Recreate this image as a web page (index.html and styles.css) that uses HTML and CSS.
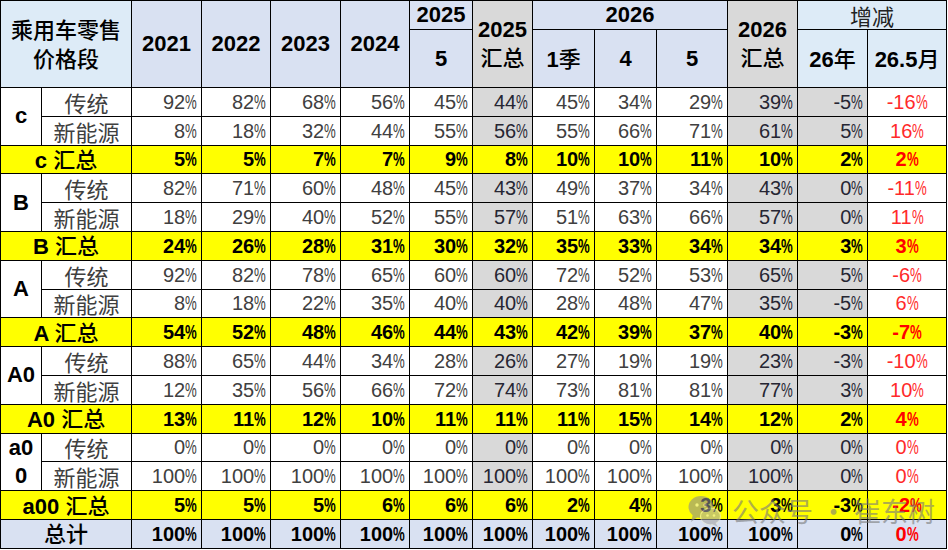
FILE: index.html
```html
<!DOCTYPE html>
<html lang="zh">
<head>
<meta charset="utf-8">
<link rel="stylesheet" href="styles.css">
</head>
<body>
<div class="wrap">
<table class="tbl">
  <colgroup>
    <col style="width:41px"><col style="width:90px">
    <col style="width:70px"><col style="width:69px"><col style="width:70px"><col style="width:69px">
    <col style="width:63px"><col style="width:60px">
    <col style="width:62px"><col style="width:62px"><col style="width:71px">
    <col style="width:70px"><col style="width:70px"><col style="width:79px">
  </colgroup>
  <thead>
    <tr class="h1">
      <th class="hb" colspan="2" rowspan="2"><span class="cj">乘用车零售<br>价格段</span></th>
      <th class="hy" rowspan="2">2021</th>
      <th class="hy" rowspan="2">2022</th>
      <th class="hy" rowspan="2">2023</th>
      <th class="hy" rowspan="2">2024</th>
      <th class="hy">2025</th>
      <th class="hg" rowspan="2">2025<br><span class="cj">汇总</span></th>
      <th class="hy" colspan="3">2026</th>
      <th class="hg" rowspan="2">2026<br><span class="cj">汇总</span></th>
      <th class="hb thin" colspan="2">增减</th>
    </tr>
    <tr class="h2">
      <th class="hy">5</th>
      <th class="hy">1<span class="cj">季</span></th>
      <th class="hy">4</th>
      <th class="hy">5</th>
      <th class="hb">26<span class="cj">年</span></th>
      <th class="hb">26.5<span class="cj">月</span></th>
    </tr>
  </thead>
  <tbody id="body"></tbody>
</table>
<div class="wm">
  <svg class="wm-ico" width="34" height="34" viewBox="0 0 34 34">
    <ellipse cx="13" cy="13" rx="12.5" ry="11" fill="#8c8c8c"/>
    <path d="M5 20 L3 28 L11 22 Z" fill="#8c8c8c"/>
    <circle cx="9" cy="11" r="1.7" fill="#e8e8d0"/>
    <circle cx="17" cy="11" r="1.7" fill="#e8e8d0"/>
    <ellipse cx="22.5" cy="22.5" rx="10" ry="8.5" fill="#a6a6a6" stroke="#e8e8d0" stroke-width="1.2"/>
    <path d="M27 28 L30 33 L23 29.5 Z" fill="#a6a6a6"/>
    <circle cx="19.5" cy="21.5" r="1.3" fill="#e8e8d0"/>
    <circle cx="26" cy="21.5" r="1.3" fill="#e8e8d0"/>
  </svg>
  <span class="wm-t">公众号<span class="dot">·</span>崔东树</span>
</div>
</div>
<script>
var data = [
  ["c", "传统", [92,82,68,56,45,44,45,34,29,39,-5,-16]],
  [null, "新能源", [8,18,32,44,55,56,55,66,71,61,5,16]],
  ["c", "sum", [5,5,7,7,9,8,10,10,11,10,2,2]],
  ["B", "传统", [82,71,60,48,45,43,49,37,34,43,0,-11]],
  [null, "新能源", [18,29,40,52,55,57,51,63,66,57,0,11]],
  ["B", "sum", [24,26,28,31,30,32,35,33,34,34,3,3]],
  ["A", "传统", [92,82,78,65,60,60,72,52,53,65,5,-6]],
  [null, "新能源", [8,18,22,35,40,40,28,48,47,35,-5,6]],
  ["A", "sum", [54,52,48,46,44,43,42,39,37,40,-3,-7]],
  ["A0", "传统", [88,65,44,34,28,26,27,19,19,23,-3,-10]],
  [null, "新能源", [12,35,56,66,72,74,73,81,81,77,3,10]],
  ["A0", "sum", [13,11,12,10,11,11,11,15,14,12,2,4]],
  ["a0<br>0", "传统", [0,0,0,0,0,0,0,0,0,0,0,0]],
  [null, "新能源", [100,100,100,100,100,100,100,100,100,100,0,0]],
  ["a00", "sum", [5,5,5,6,6,6,2,4,3,3,-3,-2]],
  ["", "total", [100,100,100,100,100,100,100,100,100,100,0,0]]
];
var grey = {5:1, 9:1, 10:1};
var html = "";
data.forEach(function (r) {
  var kind = r[1] === "sum" ? "sum" : (r[1] === "total" ? "tot" : "row");
  html += '<tr class="' + kind + '">';
  if (kind === "sum") {
    html += '<td colspan="2" class="lab">' + r[0] + ' <span class="cj">汇总</span></td>';
  } else if (kind === "tot") {
    html += '<td colspan="2" class="lab"><span class="cj">总计</span></td>';
  } else {
    if (r[0] !== null) html += '<td rowspan="2" class="cat">' + r[0] + '</td>';
    html += '<td class="sub">' + r[1] + '</td>';
  }
  r[2].forEach(function (v, i) {
    var cls = "n";
    if (kind === "row" && grey[i]) cls += " g";
    if (i === 11) cls += " red";
    var s = v < 0 ? "-" + (-v) : "" + v;
    html += '<td class="' + cls + '">' + s + '<span class="p">%</span></td>';
  });
  html += '</tr>';
});
document.getElementById("body").innerHTML = html;
</script>
</body>
</html>
```

FILE: styles.css
```css
html, body {
  margin: 0;
  padding: 0;
  background: #ffffff;
}

.wrap {
  position: relative;
  width: 948px;
  height: 550px;
  overflow: hidden;
}

.tbl {
  border-collapse: collapse;
  table-layout: fixed;
  width: 946px;
  font-family: "Liberation Sans", Arial, "Noto Sans CJK SC", sans-serif;
  color: #404040;
}

.tbl th, .tbl td {
  border: 1px solid #000;
  padding: 0;
  white-space: nowrap;
}

.cj {
  font-family: "Noto Sans CJK SC", sans-serif;
  font-weight: 500;
}

.h1 { height: 29px; }
.h2 { height: 58px; }

.tbl th {
  font-size: 22px;
  font-weight: 700;
  color: #000;
  text-align: center;
  line-height: 26px;
}

.hb { background: #ddebf7; }
.hy { background: #d9e1f2; }
.hg { background: #d9d9d9; }

.hb.thin {
  font-family: "Noto Sans CJK SC", sans-serif;
  font-weight: 400;
  color: #222;
}

.tbl tbody tr { height: 28.8px; }

.tbl td {
  font-size: 20px;
  line-height: 20px;
  height: 27px;
}

.p {
  display: inline-block;
  transform: scaleX(0.66);
  transform-origin: left center;
  margin-right: -6px;
}

.n {
  text-align: right;
  padding-right: 4px !important;
}

.n.red {
  text-align: center;
  padding-right: 0 !important;
  color: #ff2a2a;
}

.g {
  background: #d9d9d9;
  color: #262633;
}

.cat {
  text-align: center;
  font-size: 22px !important;
  font-weight: 700;
  color: #000;
  line-height: 28px !important;
}

.sub {
  text-align: center;
  font-family: "Noto Sans CJK SC", sans-serif;
  font-size: 22px !important;
  color: #404040;
}

.sum td {
  background: #ffff00;
  font-weight: 700;
  color: #000;
}

.sum td.red, .tot td.red { color: #ff0000; }

.tot td {
  background: #d9e1f2;
  font-weight: 700;
  color: #000;
}

.lab {
  text-align: center;
  font-size: 22px !important;
}

.wm {
  position: absolute;
  left: 688px;
  top: 491px;
  display: flex;
  align-items: center;
  gap: 10px;
  opacity: 0.6;
  pointer-events: none;
}

.wm-t {
  font-family: "Noto Sans CJK SC", sans-serif;
  font-size: 27px;
  color: #7a7a7a;
}

.dot {
  padding: 0 7px;
}
```
